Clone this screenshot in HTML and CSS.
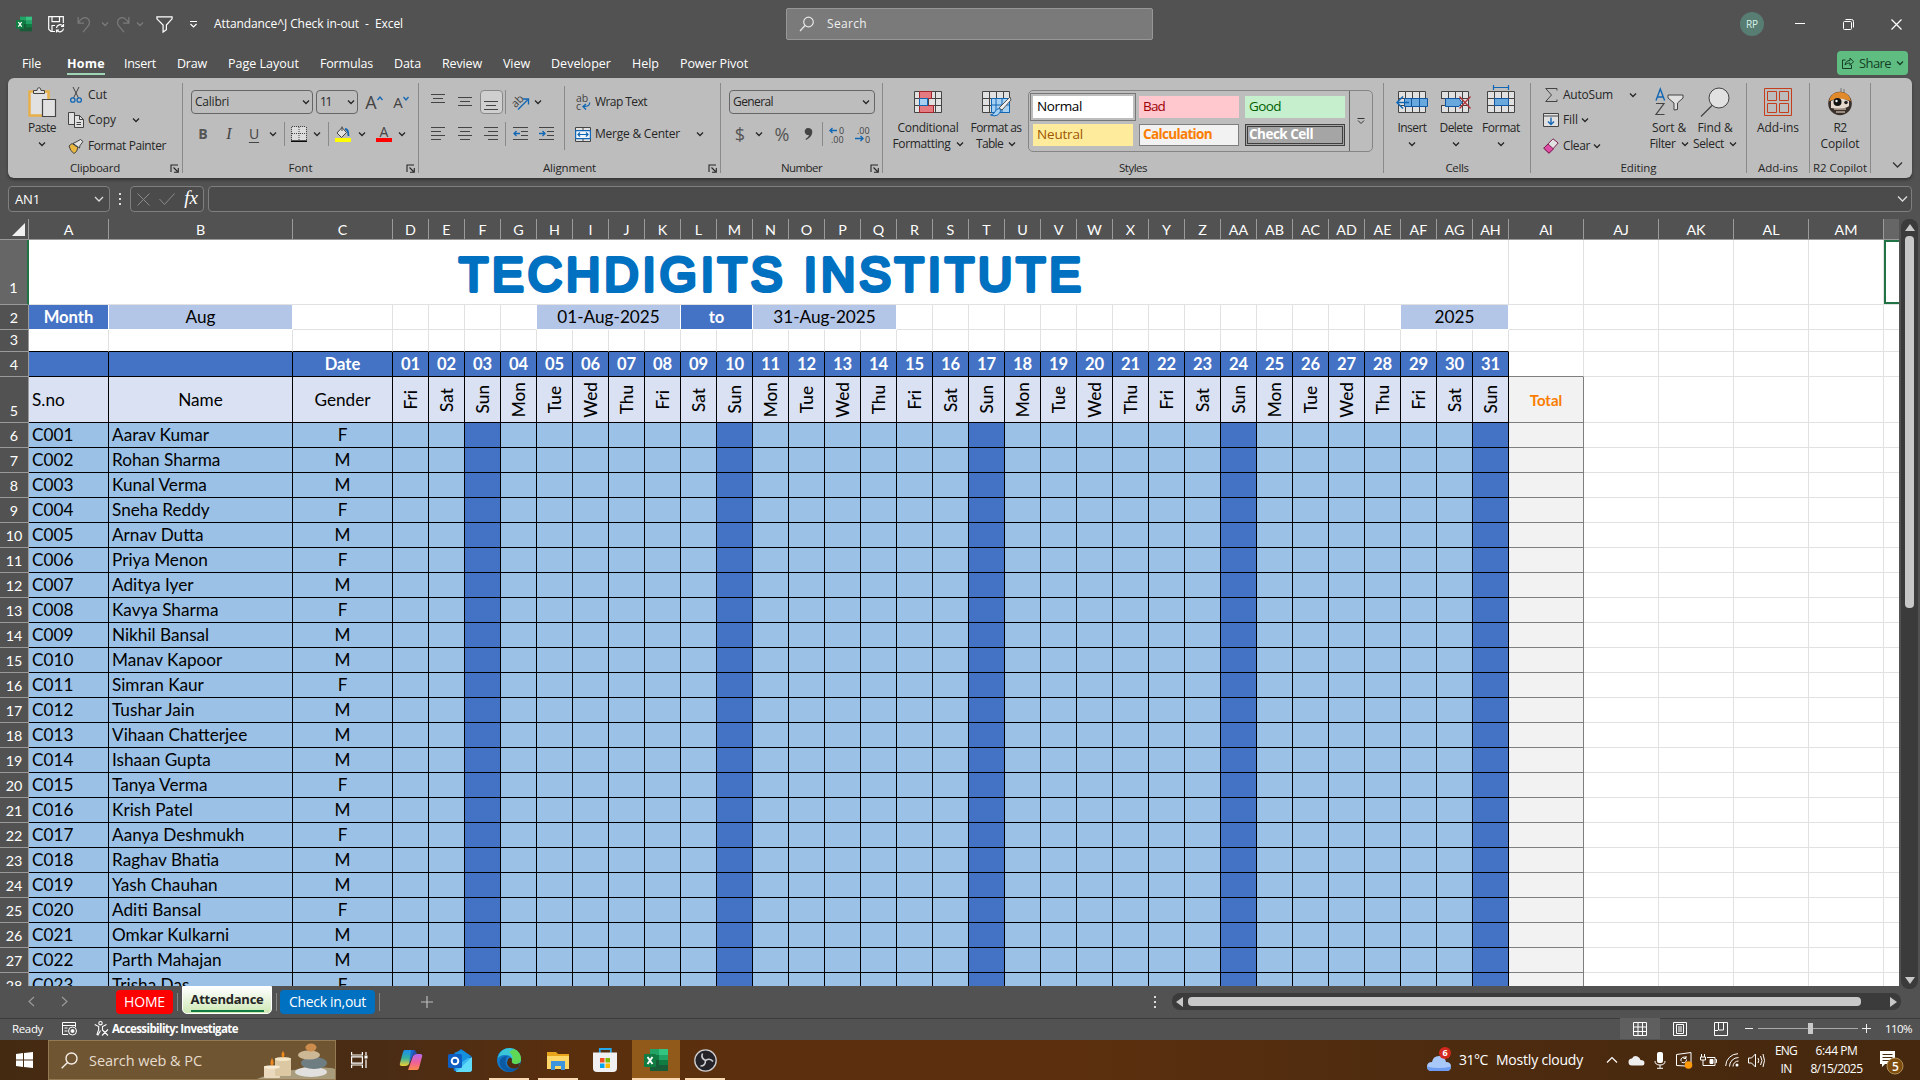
FILE: index.html
```html
<!DOCTYPE html>
<html lang="en">
<head>
<meta charset="utf-8">
<title>Attandance^J Check in-out - Excel</title>
<link rel="stylesheet" href="styles.css">
</head>
<body>
<svg class="defs" width="0" height="0" aria-hidden="true">
  <symbol id="chev" viewBox="0 0 8 8"><path d="M1 2.5l3 3 3-3" fill="none" stroke="currentColor" stroke-width="1.3"/></symbol>
  <symbol id="launch" viewBox="0 0 9 9"><path d="M8 1H1v7M3.500 3.500l4 4M8.300 4v4.300H4" fill="none" stroke="currentColor" stroke-width="1.1"/></symbol>
  <symbol id="excel" viewBox="0 0 24 22"><path d="M6 0h9v6H6z" fill="#21a366"/><path d="M15 0h9v6h-9z" fill="#33c481"/><path d="M6 6h9v5H6z" fill="#107c41"/><path d="M15 6h9v5h-9z" fill="#21a366"/><path d="M6 11h18v11H6z" fill="#185c37"/><path d="M15 11h9v5h-9z" fill="#107c41"/><rect y="5" width="12" height="13" rx="1" fill="#107c41"/><path d="M3.500 8l5 7M8.500 8l-5 7" stroke="#fff" stroke-width="1.900"/></symbol>
  <symbol id="grid3" viewBox="0 0 28 22"><path d="M.5.5h27v21H.5z" fill="#e1e1e1"/><path d="M.5.5h27v21H.5zM0 7.500h28M0 14.500h28M7.500 0v22M14.500 0v22M21.500 0v22" fill="none" stroke="#444"/></symbol>
</svg>

<header class="titlebar">
  <div class="slot w48"><svg width="16" height="16"><use href="#excel"/></svg></div>
  <div class="slot w16"><svg width="17" height="17" viewBox="0 0 17 17" fill="none" stroke="#fff" stroke-width="1.200"><path d="M7 15.500H3L.7 13.300V.7h14.600V7M4 .7v5h7.500v-5M4 15V9.500h3"/><path d="M8.500 12a3.600 3.600 0 0 1 6.500-1.800M15.500 8v2.500H13M15.500 12.500a3.600 3.600 0 0 1-6.500 1.800M8.500 16.500V14H11"/></svg></div>
  <div class="slot w42 dim"><svg width="14" height="17" viewBox="0 0 14 18" fill="none" stroke="currentColor" stroke-width="1.300"><path d="M.8 1v6.500H7M.8 7.500C3 3 7 .5 10.500 2.500c3 2 3 6 .5 8.500l-5 6"/></svg></div>
  <div class="slot w0 dim"><svg width="8" height="8"><use href="#chev"/></svg></div>
  <div class="slot w46 dim"><svg width="14" height="17" viewBox="0 0 14 18" fill="none" stroke="currentColor" stroke-width="1.300"><path d="M13.200 1v6.500H7M13.200 7.500C11 3 7 .5 3.500 2.500c-3 2-3 6-.5 8.500l5 6"/></svg></div>
  <div class="slot w0 dim"><svg width="8" height="8"><use href="#chev"/></svg></div>
  <div class="slot w30"><svg width="17" height="17" viewBox="0 0 18 18" fill="none" stroke="#fff" stroke-width="1.300"><path d="M1 1h16v2l-6 6.500v5L7.500 17V9.500L1 3z"/></svg></div>
  <div class="slot w40"><svg width="9" height="9" viewBox="0 0 9 9" fill="none" stroke="#fff" stroke-width="1.200"><path d="M1 1.500h7M1.500 4l3 3 3-3"/></svg></div>
  <div class="doc-title"><span data-w="189">Attandance^J Check in-out&nbsp; -&nbsp; Excel</span></div>
  <div class="search"><svg width="16" height="16" viewBox="0 0 16 16" fill="none" stroke="#e6e6e6" stroke-width="1.200"><circle cx="9.500" cy="6" r="4.800"/><path d="M6 9.500L1 15"/></svg><span data-w="40">Search</span></div>
  <div class="avatar"><span data-w="12">RP</span></div>
  <div class="slot w48"><svg width="10" height="10" viewBox="0 0 10 10"><path d="M0 4.500h10" stroke="#fff"/></svg></div>
  <div class="slot w48"><svg width="11" height="11" viewBox="0 0 11 11" fill="none" stroke="#fff"><rect x=".5" y="2.500" width="8" height="8" rx="1"/><path d="M2.500.5h6q2 0 2 2v6"/></svg></div>
  <div class="slot w48"><svg width="11" height="11" viewBox="0 0 11 11" stroke="#fff" stroke-width="1.200"><path d="M.5.500l10 10M10.500.5l-10 10"/></svg></div>
</header>

<nav class="tabs">
  <span class="tab file"><span data-w="19">File</span></span>
  <span class="tab on"><span data-w="38">Home</span></span>
  <span class="tab"><span data-w="32">Insert</span></span>
  <span class="tab"><span data-w="30">Draw</span></span>
  <span class="tab"><span data-w="71">Page Layout</span></span>
  <span class="tab"><span data-w="53">Formulas</span></span>
  <span class="tab"><span data-w="27">Data</span></span>
  <span class="tab"><span data-w="40">Review</span></span>
  <span class="tab"><span data-w="27">View</span></span>
  <span class="tab"><span data-w="60">Developer</span></span>
  <span class="tab"><span data-w="27">Help</span></span>
  <span class="tab"><span data-w="68">Power Pivot</span></span>
  <div class="share"><svg width="12" height="12" viewBox="0 0 12 12" fill="none" stroke="#153d25"><path d="M3.500 3H.5v8.500h9V8M3 8c.5-3 2-4.500 5-4.500V1l3.500 3.800L8 8.300V6C6 6 4.500 6.500 3 8z"/></svg><span data-w="32">Share</span><svg width="8" height="8"><use href="#chev"/></svg></div>
</nav>

<section class="ribbon">
  <div class="group g-clip">
    <div class="body">
      <div class="big w66"><div class="pic"><svg width="28" height="30" viewBox="0 0 28 30"><path d="M1.500 4.500h19v24h-19z" fill="#e1e1e1" stroke="#e8b04a" stroke-width="2.500"/><path d="M5.500 6.500v-3H9Q9 .7 11 .7t2 2.800h3.500v3z" fill="#e1e1e1" stroke="#444"/><path d="M14.500 12.500h13v17h-13z" fill="#e1e1e1" stroke="#444" stroke-width="1.200"/></svg></div><span data-w="28">Paste</span><svg class="under" width="8" height="8"><use href="#chev"/></svg></div>
      <div class="stack">
        <div class="row"><div class="ico"><svg width="12" height="16" viewBox="0 0 12 16" fill="none"><path d="M3 0l5.500 11M9 0L3.500 11" stroke="#444"/><circle cx="2.800" cy="13" r="2.200" stroke="#1267b4" stroke-width="1.300"/><circle cx="9.200" cy="13" r="2.200" stroke="#1267b4" stroke-width="1.300"/></svg></div><span data-w="19">Cut</span></div>
        <div class="row"><div class="ico"><svg width="16" height="16" viewBox="0 0 16 16" fill="#e1e1e1" stroke="#444"><path d="M.5.500h6v12h-6z"/><path d="M6.500 3.500h5l4 4v8h-9z"/><path d="M11.500 3.500v4h4M8.500 10.500h4.500M8.500 12.500h4.500" fill="none"/></svg></div><span data-w="28">Copy</span><svg class="ml16" width="8" height="8"><use href="#chev"/></svg></div>
        <div class="row"><div class="ico"><svg width="16" height="15" viewBox="0 0 16 15"><path d="M1 7l3-2.500 6 4-1.500 4L6 14.500Q2 12 1 7z" fill="#e9b73f" stroke="#444"/><path d="M5 4.500L8 3l4.500-2.500 2.500 2-3 4-.5 2.500z" fill="#e1e1e1" stroke="#444"/></svg></div><span data-w="78">Format Painter</span></div>
      </div>
    </div>
    <div class="label"><span data-w="50">Clipboard</span><svg class="launch" width="9" height="9"><use href="#launch"/></svg></div>
  </div>

  <div class="group g-font">
    <div class="body two">
      <div class="line">
        <div class="combo c122"><span data-w="34">Calibri</span><svg width="8" height="8"><use href="#chev"/></svg></div>
        <div class="combo c42"><span data-w="11">11</span><svg width="8" height="8"><use href="#chev"/></svg></div>
        <div class="slot w32 glyph a-big">A<svg width="6" height="5" viewBox="0 0 6 5"><path d="M.5 4L3 1l2.500 3" fill="none" stroke="#1267b4" stroke-width="1.300"/></svg></div>
        <div class="slot w22 glyph a-small">A<svg width="6" height="5" viewBox="0 0 6 5"><path d="M.5 1L3 4l2.500-3" fill="none" stroke="#1267b4" stroke-width="1.300"/></svg></div>
      </div>
      <div class="line">
        <div class="slot w24 fb">B</div><div class="slot w28 fi">I</div><div class="slot w22 fu">U</div><div class="slot w16"><svg width="8" height="8"><use href="#chev"/></svg></div>
        <div class="slot w6"><i class="sep"></i></div>
        <div class="slot w23"><svg width="16" height="16" viewBox="0 0 16 16"><path d="M1 1h14v13H1z" fill="#ddd"/><path d="M1 .5h14M.5 1v13M15.500 1v13M8 1v13M1 7.500h14" stroke="#444" stroke-dasharray="1 1" fill="none"/><path d="M0 15.200h16" stroke="#000" stroke-width="1.500"/></svg></div>
        <div class="slot w14"><svg width="8" height="8"><use href="#chev"/></svg></div>
        <div class="slot w8"><i class="sep"></i></div>
        <div class="slot w22"><svg width="16" height="16" viewBox="0 0 16 16"><path d="M7 1.500L2 7l4.500 4.500 5-5zM7 5V.5" fill="#e1e1e1" stroke="#444"/><path d="M10 3c3 0 3.500 3 3.500 7" fill="none" stroke="#1267b4" stroke-width="1.800"/><path d="M0 12h16v4H0z" fill="#ff0"/></svg></div>
        <div class="slot w16"><svg width="8" height="8"><use href="#chev"/></svg></div>
        <div class="slot w28"><div class="fontcolor">A</div></div>
        <div class="slot w8"><svg width="8" height="8"><use href="#chev"/></svg></div>
      </div>
    </div>
    <div class="label"><span data-w="24">Font</span><svg class="launch" width="9" height="9"><use href="#launch"/></svg></div>
  </div>

  <div class="group g-align">
    <div class="body two">
      <div class="split">
        <div>
          <div class="line">
            <div class="slot w28 lift"><svg width="14" height="12" viewBox="0 0 14 12"><path d="M0 1.500h14M2 5.500h10M0 9.500h14" stroke="#444"/></svg></div>
            <div class="slot w26"><svg width="14" height="12" viewBox="0 0 14 12"><path d="M0 1.500h14M2 5.500h10M0 9.500h14" stroke="#444"/></svg></div>
            <div class="slot w26"><div class="pressed"><svg width="14" height="12" viewBox="0 0 14 12"><path d="M0 1.500h14M2 5.500h10M0 9.500h14" stroke="#444"/></svg></div></div>
            <div class="slot w3"><i class="sep"></i></div>
            <div class="slot w28"><svg width="17" height="17" viewBox="0 0 17 17"><text x="-1" y="10" transform="rotate(-45 6 8)" font-size="11" font-family="Open Sans" fill="#444">ab</text><path d="M5 15.500L14.500 6M10 5h5.500v5.500" fill="none" stroke="#1267b4" stroke-width="1.300"/></svg></div>
            <div class="slot w6"><svg width="8" height="8"><use href="#chev"/></svg></div>
          </div>
          <div class="line">
            <div class="slot w28"><svg width="14" height="14" viewBox="0 0 14 14"><path d="M0 .5h14M0 4.500h10M0 8.500h14M0 12.500h10" stroke="#444"/></svg></div>
            <div class="slot w26"><svg width="14" height="14" viewBox="0 0 14 14"><path d="M0 .5h14M2 4.500h10M0 8.500h14M2 12.500h10" stroke="#444"/></svg></div>
            <div class="slot w26"><svg width="14" height="14" viewBox="0 0 14 14"><path d="M0 .5h14M4 4.500h10M0 8.500h14M4 12.500h10" stroke="#444"/></svg></div>
            <div class="slot w3"><i class="sep"></i></div>
            <div class="slot w26"><svg width="15" height="14" viewBox="0 0 15 14"><path d="M0 .5h15M8 4.500h7M8 8.500h7M0 12.500h15" stroke="#444"/><path d="M7 6.500H1M3.500 4L1 6.500 3.500 9" fill="none" stroke="#1267b4" stroke-width="1.300"/></svg></div>
            <div class="slot w26"><svg width="15" height="14" viewBox="0 0 15 14"><path d="M0 .5h15M8 4.500h7M8 8.500h7M0 12.500h15" stroke="#444"/><path d="M0 6.500h6M3.500 4L6 6.500 3.500 9" fill="none" stroke="#1267b4" stroke-width="1.300"/></svg></div>
          </div>
        </div>
        <div class="wraps">
          <div class="line"><svg width="16" height="17" viewBox="0 0 16 17"><text x="1" y="8" font-size="10.500" font-family="Open Sans" fill="#444">ab</text><text x="1" y="16" font-size="10.500" font-family="Open Sans" fill="#444">c</text><path d="M14.500 8.500q1 4-6 4M11 10l-3 2.500L11 15.500" fill="none" stroke="#1267b4" stroke-width="1.400"/></svg><span data-w="52">Wrap Text</span></div>
          <div class="line"><svg width="16" height="15" viewBox="0 0 16 15"><path d="M.5.500h15v14H.5z" fill="#e1e1e1" stroke="#444"/><path d="M8 0v3M8 12v3" stroke="#444"/><path d="M.6 3.600h14.800v8H.6z" fill="#eef5fb" stroke="#1267b4" stroke-width="1.200"/><path d="M3 7.500h10M5 5.500l-2 2 2 2M11 5.500l2 2-2 2" fill="none" stroke="#1267b4" stroke-width="1.200"/></svg><span data-w="85">Merge &amp; Center</span><svg class="ml16" width="8" height="8"><use href="#chev"/></svg></div>
        </div>
      </div>
    </div>
    <div class="label"><span data-w="53">Alignment</span><svg class="launch" width="9" height="9"><use href="#launch"/></svg></div>
  </div>

  <div class="group g-num">
    <div class="body two">
      <div class="line"><div class="combo c146"><span data-w="40">General</span><svg width="8" height="8"><use href="#chev"/></svg></div></div>
      <div class="line">
        <div class="slot w22 num">$</div><div class="slot w16"><svg width="8" height="8"><use href="#chev"/></svg></div><div class="slot w30 num">%</div>
        <div class="slot w22"><svg width="9" height="14" viewBox="0 0 9 14"><path d="M4 1a3.500 3.500 0 1 0 1 6.900Q4.500 10.500 1.500 12l.5 1Q8.500 10 8.300 4.500 8 1 4 1z" fill="#444"/></svg></div>
        <div class="slot w6"><i class="sep"></i></div>
        <div class="slot w24"><svg width="16" height="17" viewBox="0 0 16 17"><text x="10" y="7.500" class="dec">0</text><text x="2" y="16.500" class="dec">.00</text><path d="M8 4.500H1M3.500 2L1 4.500 3.500 7" fill="none" stroke="#1267b4" stroke-width="1.400"/></svg></div>
        <div class="slot w27"><svg width="16" height="17" viewBox="0 0 16 17"><text x="2" y="7.500" class="dec">.00</text><text x="10" y="16.500" class="dec">0</text><path d="M0 12.500h8M5.500 10L8 12.500 5.500 15" fill="none" stroke="#1267b4" stroke-width="1.400"/></svg></div>
      </div>
    </div>
    <div class="label"><span data-w="41">Number</span><svg class="launch" width="9" height="9"><use href="#launch"/></svg></div>
  </div>

  <div class="group g-styles">
    <div class="body">
      <div class="big w90"><div class="pic"><svg width="28" height="22" viewBox="0 0 28 22"><use href="#grid3"/><path d="M5.500.5h12v7h-12zM5.500 14.500h14v7h-14z" fill="#e47b80" stroke="#a4262c"/><path d="M5.500 7.500h8v7h-8z" fill="#a6d1f2" stroke="#1267b4"/></svg></div><span data-w="61">Conditional</span><span class="second"><span data-w="58">Formatting</span><svg width="8" height="8"><use href="#chev"/></svg></span></div>
      <div class="big w46x"><div class="pic"><svg width="32" height="28" viewBox="-2 -3 32 28"><use href="#grid3" width="28" height="22"/><path d="M9.500 7.500h18v14h-18z" fill="#a6d1f2" stroke="#1267b4"/><path d="M14 7v14M20 7v14M9 14h18" stroke="#1267b4"/><path d="M17 17L28 6l1 3-9 10z" fill="#eee" stroke="#555"/><path d="M19 19q-3-3-5.500 1-2 4-5 4 8 3 10.500-5z" fill="#a6d1f2" stroke="#1267b4"/></svg></div><span data-w="51">Format as</span><span class="second"><span data-w="27">Table</span><svg width="8" height="8"><use href="#chev"/></svg></span></div>
      <div class="gallery">
        <div class="swatches">
          <div class="sw normal"><span data-w="45">Normal</span></div><div class="sw bad"><span data-w="22">Bad</span></div><div class="sw good"><span data-w="32">Good</span></div>
          <div class="sw neutral"><span data-w="46">Neutral</span></div><div class="sw calc"><span data-w="69">Calculation</span></div><div class="sw check"><span data-w="64">Check Cell</span></div>
        </div>
        <div class="more"><svg width="8" height="8" viewBox="0 0 8 8" fill="none" stroke="#333"><path d="M.5 1.500h7M1 3.500l3 3 3-3"/></svg></div>
      </div>
    </div>
    <div class="label"><span data-w="28">Styles</span></div>
  </div>

  <div class="group g-cells">
    <div class="body">
      <div class="big w56"><div class="pic"><svg width="32" height="22" viewBox="0 0 32 22"><use href="#grid3" x="2" width="28" height="22"/><path d="M8.500 7.500h23v8h-23z" fill="#69a8dc" stroke="#1257a4"/><path d="M15.500 8v7M23.500 8v7" stroke="#1257a4"/><path d="M13 11.500H1.500M7 5.500l-6 6 6 6" fill="none" stroke="#1267b4" stroke-width="1.500"/></svg></div><span data-w="29">Insert</span><svg class="under" width="8" height="8"><use href="#chev"/></svg></div>
      <div class="big w32"><div class="pic"><svg width="30" height="22" viewBox="0 0 30 22"><use href="#grid3" width="28" height="22"/><path d="M0 8h4v6H0z" fill="#bdbdbd"/><path d="M4.500 7.500H18l3 4-3 4H4.500z" fill="#69a8dc" stroke="#1257a4"/><path d="M18.500 5.500l11 12M29.500 5.500l-11 12" stroke="#b0343a" stroke-width="1.300"/></svg></div><span data-w="33">Delete</span><svg class="under" width="8" height="8"><use href="#chev"/></svg></div>
      <div class="big w58"><div class="pic"><svg width="28" height="32" viewBox="0 0 28 32"><use href="#grid3" y="5" width="28" height="22"/><path d="M7.500 12.500h14v7h-14z" fill="#69a8dc" stroke="#1257a4"/><path d="M6 1.500h16M6.500-1v5M21.500-1v5" stroke="#1267b4" stroke-width="1.200"/></svg></div><span data-w="38">Format</span><svg class="under" width="8" height="8"><use href="#chev"/></svg></div>
    </div>
    <div class="label"><span data-w="23">Cells</span></div>
  </div>

  <div class="group g-edit">
    <div class="body">
      <div class="stack">
        <div class="row"><div class="ico"><svg width="12" height="14" viewBox="0 0 12 14"><path d="M12 2.500V.500H.7L6.500 7 .7 13.500H12v-2" fill="none" stroke="#444"/></svg></div><span data-w="50">AutoSum</span><svg class="ml16" width="8" height="8"><use href="#chev"/></svg></div>
        <div class="row"><div class="ico"><svg width="16" height="14" viewBox="0 0 16 14"><path d="M.5.500h15v13H.5z" fill="#e1e1e1" stroke="#444"/><path d="M0 3h16" stroke="#444"/><path d="M8 4.500v7M5 8.500l3 3 3-3" fill="none" stroke="#1267b4" stroke-width="1.400"/></svg></div><span data-w="15">Fill</span><svg class="ml2" width="8" height="8"><use href="#chev"/></svg></div>
        <div class="row"><div class="ico"><svg width="16" height="16" viewBox="0 0 16 16"><path d="M10 .8L15.200 5 6 15.200.8 10.200z" fill="#e1e1e1" stroke="#7a2050"/><path d="M5 6l5.500 5L6 15.200.8 10.200z" fill="#e04ba5" stroke="#7a2050"/></svg></div><span data-w="27">Clear</span><svg class="ml2" width="8" height="8"><use href="#chev"/></svg></div>
      </div>
      <div class="big w46"><div class="pic"><svg width="29" height="28" viewBox="0 0 29 28" fill="none"><path d="M1 12.500L5.300 1l4.300 11.500M2.500 9h5.700" stroke="#1267b4" stroke-width="1.400"/><path d="M1 15.500h8L1 26.500h8.500" stroke="#444" stroke-width="1.200"/><path d="M13 7h15v3l-5.500 5v6.500L19 22v-7l-6-5z" fill="#e1e1e1" stroke="#444"/></svg></div><span data-w="34">Sort &amp;</span><span class="second"><span data-w="26">Filter</span><svg width="8" height="8"><use href="#chev"/></svg></span></div>
      <div class="big w46"><div class="pic"><svg width="30" height="30" viewBox="0 0 30 30"><circle cx="19" cy="11" r="10" fill="#e1e1e1" stroke="#444"/><path d="M12 18.500L1 29.500" stroke="#444" stroke-width="1.300"/></svg></div><span data-w="35">Find &amp;</span><span class="second"><span data-w="31">Select</span><svg width="8" height="8"><use href="#chev"/></svg></span></div>
    </div>
    <div class="label"><span data-w="36">Editing</span></div>
  </div>

  <div class="group g-add">
    <div class="body"><div class="big w62"><div class="pic"><svg width="28" height="28" viewBox="0 0 28 28" fill="none" stroke="#c43e1c"><path d="M.5.500h27v27H.5zM3.500 3.500h9v9h-9zM15.500 3.500h9v9h-9zM3.500 15.500h9v9h-9zM15.500 15.500h9v9h-9z"/></svg></div><span data-w="42">Add-ins</span></div></div>
    <div class="label"><span data-w="40">Add-ins</span></div>
  </div>

  <div class="group g-r2">
    <div class="body"><div class="big w60"><div class="pic"><svg width="24" height="28" viewBox="0 0 24 28"><path d="M13 0v4M16 1v4" stroke="#777"/><circle cx="12" cy="15.500" r="11.800" fill="#3a302b"/><path d="M1 13Q3 4 12 4t11 9q-11-4-22 0z" fill="#e08a2c"/><path d="M3 13q9-5 18 0v5q-5 4-18 2z" fill="#e4d9cc"/><circle cx="9.500" cy="14" r="4" fill="#111"/><circle cx="8.500" cy="13" r="1.200" fill="#fff"/><circle cx="18" cy="14.500" r="1.800" fill="#222"/><path d="M6 21h12M8 24h9" stroke="#b9a99a" stroke-width="1.600"/></svg></div><span data-w="13">R2</span><span data-w="39">Copilot</span></div></div>
    <div class="label"><span data-w="54">R2 Copilot</span></div>
  </div>
  <div class="collapse"><svg width="11" height="8" viewBox="0 0 11 8"><path d="M1 1.500l4.500 4.500L10 1.500" fill="none" stroke="#333" stroke-width="1.300"/></svg></div>
</section>

<section class="formula">
  <div class="namebox"><span data-w="25">AN1</span><svg width="10" height="8" viewBox="0 0 10 8"><path d="M1 2l4 4 4-4" fill="none" stroke="#ddd" stroke-width="1.300"/></svg></div>
  <div class="dots"><i></i><i></i><i></i></div>
  <div class="fx"><svg width="13" height="13" viewBox="0 0 13 13"><path d="M.5.500l12 12M12.500.5l-12 12" stroke="#8b8b8b"/></svg><svg width="16" height="12" viewBox="0 0 16 12"><path d="M.5 6l5 5.500L15.500.5" fill="none" stroke="#8b8b8b"/></svg><em>fx</em></div>
  <div class="input"><svg width="11" height="8" viewBox="0 0 11 8"><path d="M1 1.500l4.500 4.500L10 1.500" fill="none" stroke="#ddd" stroke-width="1.300"/></svg></div>
</section>

<main class="work">
  <div class="sheet" id="sheet"></div>
  <div class="vscroll"><i class="up"></i><i class="thumb"></i><i class="down"></i></div>
</main>

<footer class="sheetbar">
  <div class="arrows"><svg width="7" height="11" viewBox="0 0 7 11"><path d="M6 1L1 5.500 6 10" fill="none" stroke="#9a9a9a" stroke-width="1.200"/></svg><svg width="7" height="11" viewBox="0 0 7 11"><path d="M1 1l5 4.500L1 10" fill="none" stroke="#9a9a9a" stroke-width="1.200"/></svg></div>
  <div class="stab red"><span data-w="41">HOME</span></div><i class="tsep"></i>
  <div class="stab cur"><span data-w="73">Attendance</span></div><i class="tsep"></i>
  <div class="stab blue"><span data-w="77">Check in,out</span></div><i class="tsep"></i>
  <div class="plus"><svg width="12" height="12" viewBox="0 0 12 12"><path d="M6 0v12M0 6h12" stroke="#bbb" stroke-width="1.200"/></svg></div>
  <div class="dots hd"><i></i><i></i><i></i></div>
  <div class="hscroll"><i class="left"></i><i class="bar"></i><i class="right"></i></div>
</footer>

<div class="status">
  <span data-w="31">Ready</span>
  <svg class="rec" width="15" height="14" viewBox="0 0 15 14" fill="none" stroke="#fff"><path d="M6 12.500H.5v-12h13V5M0 3.500h14M2.500 6h3M2.500 9h3"/><circle cx="10.500" cy="9" r="4"/><circle cx="10.500" cy="9" r="1.500" fill="#fff"/></svg>
  <svg class="acc" width="15" height="15" viewBox="0 0 15 15" fill="none" stroke="#fff" stroke-width="1.100"><circle cx="6.500" cy="2.200" r="1.700"/><path d="M.7 3.500l4 2v3L3 13.500l1 .5 2.500-4.500M12.500 3.500l-4 2v3M8 8.500l6 6M14 8.500l-6 6"/></svg>
  <b data-w="126">Accessibility: Investigate</b>
  <div class="views">
    <div class="vb active"><svg width="14" height="14" viewBox="0 0 14 14" fill="none" stroke="#fff"><path d="M.5.500h13v13H.5zM5 0v14M9.500 0v14M0 5h14M0 9.500h14"/></svg></div>
    <div class="vb"><svg width="14" height="14" viewBox="0 0 14 14" fill="none" stroke="#fff"><path d="M.5.500h13v13H.5zM3.500 2.500h7v9h-7zM5 5h4M5 7h4M5 9h4"/></svg></div>
    <div class="vb"><svg width="14" height="14" viewBox="0 0 14 14" fill="none" stroke="#fff"><path d="M.5.500h13v13H.5zM4.500 0v8h5V0M0 8.500h4"/></svg></div>
    <i class="minus"></i><div class="slider"><i></i></div><svg width="9" height="9" viewBox="0 0 9 9"><path d="M4.500 0v9M0 4.500h9" stroke="#eee"/></svg><span class="pct"><span data-w="27">110%</span></span>
  </div>
</div>

<div class="taskbar">
  <div class="slot w48"><svg width="17" height="16" viewBox="0 0 17 16" fill="#fff"><path d="M0 2l7-1v6.500H0zM8 .9L17 0v7.500H8zM0 8.500h7V15l-7-1zM8 8.500h9V16l-9-1z"/></svg></div>
  <div class="tsearch"><svg width="17" height="17" viewBox="0 0 17 17" fill="none" stroke="#f5efe6" stroke-width="1.400"><circle cx="10.500" cy="6.500" r="5.500"/><path d="M6.500 10.500L.7 16.300"/></svg><span data-w="113">Search web &amp; PC</span>
    <svg class="art" width="78" height="38" viewBox="0 0 78 38"><path d="M0 38q20-9 50-10 20-3 28 0v10z" fill="#a89c7c"/><rect x="7" y="25" width="16" height="12" rx="1" fill="#ead9bd"/><rect x="18" y="17" width="16" height="18" rx="1" fill="#dcc9a4"/><ellipse cx="26" cy="18" rx="8" ry="2" fill="#f3e6c6"/><ellipse cx="15" cy="26" rx="8" ry="1.800" fill="#f8ecd4"/><path d="M15 25q-3-3 0-8 3 5 0 8zM26 17q-3-3 0-7 3 4 0 7z" fill="#f08a1d"/><ellipse cx="54" cy="31" rx="16" ry="5" fill="#e1e0de"/><ellipse cx="57" cy="22" rx="13" ry="6" fill="#6d7d81"/><ellipse cx="52" cy="14" rx="11" ry="4.500" fill="#cdb896"/><ellipse cx="54" cy="6.500" rx="5.500" ry="4" fill="#cc8c4d"/></svg></div>
  <div class="slot w47"><svg width="17" height="16" viewBox="0 0 17 16" fill="none" stroke="#fff" stroke-width="1.200"><path d="M.6 0v3h10.800V0M.6 16v-3h10.800v3M.6 4.800h10.800v6.400H.6zM15 0v3M15 7.500V16"/><path d="M13.500 3.500h3v3h-3z" fill="#fff" stroke="none"/></svg></div>
  <div class="slot w56t"><svg width="24" height="22" viewBox="0 0 24 22"><defs><linearGradient id="cp1" x2="0" y2="1"><stop offset="0" stop-color="#1b8df0"/><stop offset=".5" stop-color="#35b0a0"/><stop offset="1" stop-color="#f3cf2e"/></linearGradient><linearGradient id="cp2" x2="0" y2="1"><stop offset="0" stop-color="#b36bf0"/><stop offset=".5" stop-color="#ee5f9c"/><stop offset="1" stop-color="#fb8b4a"/></linearGradient></defs><path d="M6 1h9l-5 14q-1 2-4 2H3q-3 0-2-3L4 3q.5-2 2-2z" fill="url(#cp1)"/><path d="M18 21H9l5-14q1-2 4-2h3q3 0 2 3l-3 11q-.5 2-2 2z" fill="url(#cp2)"/><path d="M12 1h4l2 4q-4 0-5 4l-3 6z" fill="#1c5bd0" opacity=".8"/></svg></div>
  <div class="slot w42t"><svg width="24" height="23" viewBox="0 0 24 23"><path d="M3 8L13 0l11 8v14H6z" fill="#1872c8"/><path d="M5 9h19v11q0 3-3 3H8z" fill="#3ab7f0"/><path d="M24 8L8 23h13q3 0 3-3z" fill="#5fdcf7"/><path d="M6 4l8-3 9 6-9 6z" fill="#1490df"/><rect y="5" width="14" height="14" rx="1.500" fill="#0f5ec1"/><circle cx="7" cy="12" r="3.300" fill="none" stroke="#fff" stroke-width="2"/></svg></div>
  <div class="slot w56t app"><svg width="24" height="24" viewBox="0 0 24 24"><circle cx="12" cy="12" r="12" fill="#1579c8"/><path d="M1 9Q4 0 13 0t11 11q0 5-6 5-4 0-3-3 0-6-7-6-5 0-7 3z" fill="#39c7d8"/><path d="M17 1q7 3 7 10 0 5-6 5-4 0-3-3 2-6-3-9z" fill="#5fd855"/><path d="M9 11q-2 6 3 9 5 2 10-2-4 7-12 5.500Q1 20 3 12q2-4 8-4-2 1-2 3z" fill="#0c59a4"/><path d="M15 12q-1 2 1 3.500 3 1.500 7-.5l-1 4q-6 3-10 0-4-4 0-9 3-1 3 2z" fill="#502c10"/></svg></div>
  <div class="slot w42e app"><svg width="22" height="19" viewBox="0 0 22 19"><path d="M0 1h9l2 2h11v15H0z" fill="#e8a51b"/><path d="M0 5h22v13H0z" fill="#ffd768"/><path d="M4 10h14v9h-4v-4H8v4H4z" fill="#3b94dc"/></svg></div>
  <div class="slot w54t"><svg width="24" height="24" viewBox="0 0 24 24"><path d="M6.800 6V1h11v5" fill="none" stroke="#27a7ea" stroke-width="1.800"/><path d="M0 4.500h24V20q0 4-4 4H4q-4 0-4-4z" fill="#f0f0f2"/><path d="M7 10h4.500v4.500H7z" fill="#f25022"/><path d="M12.500 10H17v4.500h-4.500z" fill="#7fba00"/><path d="M7 15.500h4.500V20H7z" fill="#00a4ef"/><path d="M12.500 15.500H17V20h-4.500z" fill="#ffb900"/></svg></div>
  <div class="slot w48 app hot"><svg width="24" height="22"><use href="#excel"/></svg></div>
  <div class="slot w50 app"><svg width="23" height="23" viewBox="0 0 23 23"><circle cx="11.500" cy="11.500" r="10.700" fill="#25232a" stroke="#cfcfd2" stroke-width="1.300"/><path d="M11.500 11.500Q6.500 9 8.500 4.500M11.500 11.500Q16 8.500 19 12.500M11.500 11.500Q11.500 17 6.500 17" fill="none" stroke="#cfcfd2" stroke-width="1.600"/></svg></div>
  <div class="tray">
    <div class="weather"><svg width="28" height="26" viewBox="0 0 28 26"><path d="M6 24q-5 0-5-4.500T6 15q1-6 7-6t7 6q5 0 5 4.500T20 24z" fill="#a9c8fa"/><path d="M6 24q-5 0-5-4.500 12 3 24 0Q25 24 20 24z" fill="#6d9cf0"/><circle cx="19" cy="6" r="6" fill="#d3281e"/><text x="16.600" y="9.300" font-size="9" font-weight="700" font-family="Open Sans" fill="#fff">6</text></svg></div>
    <span class="temp" data-w="29">31°C</span><span class="cond" data-w="87">Mostly cloudy</span>
    <div class="slot w24y"><svg width="12" height="8" viewBox="0 0 12 8"><path d="M1 6.500l5-5 5 5" fill="none" stroke="#fff" stroke-width="1.200"/></svg></div>
    <div class="slot w24y"><svg width="17" height="11" viewBox="0 0 17 11"><path d="M4 10.500a3.500 3.500 0 0 1 0-7Q6 0 9.500 1.500q2.500 1 3 3.500 4 0 4 3t-3 2.500z" fill="#eee"/></svg></div>
    <div class="slot w24y"><svg width="12" height="17" viewBox="0 0 12 17"><rect x="3" width="6" height="11" rx="2" fill="#fff"/><path d="M1 9q0 4 5 4t5-4M6 13v3M3 16.300h6" fill="none" stroke="#fff"/></svg></div>
    <div class="slot w24y"><svg width="17" height="17" viewBox="0 0 17 17" fill="none" stroke="#fff"><path d="M.5 2.500L15 .5V12M.5 2.500v11l9 .5M5 9a3 3 0 0 1 5-3M10 4v2.500H7.500M10.500 7.500a3 3 0 0 1-5 2.500"/><circle cx="12.500" cy="13" r="3.800" fill="#ff9a0c" stroke="none"/></svg></div>
    <div class="slot w24y"><svg width="17" height="12" viewBox="0 0 17 12" fill="none" stroke="#fff"><path d="M1.500 0v3M4.500 0v3M.5 3h5v3h-5zM3 6v5.500h12v-8H7M15.500 5.500h1v3h-1"/><path d="M10 5.500h3v4h-3z" fill="#fff"/></svg></div>
    <div class="slot w24y"><svg width="14" height="14" viewBox="0 0 14 14" fill="none" stroke="#fff"><path d="M.7 13A12.500 12.500 0 0 1 13 .7M4.500 13.500a9 9 0 0 1 9-9M8 13.500A5.500 5.500 0 0 1 13.500 8"/><circle cx="12" cy="12" r="1.500" fill="#fff" stroke="none"/></svg></div>
    <div class="slot w24y"><svg width="17" height="15" viewBox="0 0 17 15" fill="none" stroke="#fff"><path d="M.5 5h3L7.500 1v13L3.500 10h-3zM10 5q1.500 2.500 0 5M12.500 3q3 4.500 0 9M15 1q3 6.500 0 13"/></svg></div>
    <div class="twin lang"><span data-w="22">ENG</span><span data-w="11">IN</span></div>
    <div class="twin clock"><span data-w="42">6:44 PM</span><span data-w="52">8/15/2025</span></div>
    <div class="notif"><svg width="26" height="26" viewBox="0 0 26 26"><path d="M1 2h15v13H6l-3 3v-3H1z" fill="#fff"/><path d="M3.500 5.500h10M3.500 8.500h10M3.500 11.500h7" stroke="#4a2a0e"/><circle cx="16" cy="17" r="8" fill="#7e4d0e" stroke="#b08d55"/><text x="13" y="21.500" font-size="12" font-weight="600" font-family="Open Sans" fill="#fff">5</text></svg></div>
  </div>
</div>
<script src="app.js"></script>
</body>
</html>
```
FILE: styles.css
```css
* { box-sizing: border-box; }
body { margin: 0; width: 1920px; height: 1080px; overflow: hidden; background: #525252; color: #fff; font: 12px/16px "Open Sans", "Noto Sans", sans-serif; display: flex; flex-direction: column; }
svg { display: block; flex: none; overflow: visible; }
.defs { position: absolute; }
span, b { white-space: nowrap; }
i { display: block; }
[data-w] { display: inline-block; flex: none; }

.slot { display: flex; align-items: center; justify-content: center; flex: none; }
.w0 { width: 0; } .w3 { width: 3px; } .w6 { width: 6px; } .w8 { width: 8px; } .w14 { width: 14px; } .w16 { width: 16px; }
.w22 { width: 22px; } .w23 { width: 23px; } .w24 { width: 24px; } .w26 { width: 26px; } .w27 { width: 27px; } .w28 { width: 28px; }
.w30 { width: 30px; } .w32 { width: 32px; } .w40 { width: 40px; } .w42 { width: 42px; } .w46 { width: 46px; } .w47 { width: 47px; }
.w46x { width: 46px; } .w48 { width: 48px; } .w50 { width: 50px; } .w56 { width: 56px; } .w58 { width: 58px; }
.w60 { width: 60px; } .w62 { width: 62px; } .w66 { width: 60px; margin-left: 3px; } .w90 { width: 90px; }

/* title bar */
.titlebar { display: flex; height: 48px; align-items: center; flex: none; }
.dim { color: #7b7b7b; }
.titlebar .w16 { width: 17px; }
.titlebar .slot.w42 { width: 38px; }
.titlebar .slot.w0 { width: 8px; margin: 0 -2px; }
.titlebar .slot.w46 { width: 31px; }
.titlebar .w30 { margin-left: 4px; width: 37px; }
.titlebar .w40 { width: 20px; }
.doc-title { width: 583px; padding-left: 11px; }
.search { width: 367px; height: 32px; background: #7a7a7a; border: 1px solid #979797; border-radius: 2px; display: flex; align-items: center; gap: 12px; padding-left: 12px; color: #f0f0f0; }
.avatar { margin: 0 12px 0 auto; width: 24px; height: 24px; border-radius: 50%; background: #587d73; color: #d4f2e6; font-size: 10px; display: flex; align-items: center; justify-content: center; }

/* ribbon tabs */
.tabs { display: flex; height: 30px; padding: 0 12px 0 22px; gap: 21px; flex: none; align-items: flex-start; font-size: 12.500px; }
.tab { height: 27px; line-height: 31px; border-bottom: 2px solid transparent; }
.file { margin-right: 5px; }
.on { font-weight: 700; border-color: #9fd5b7; margin-right: -2px; }
.share { margin: 3px 0 0 auto; width: 71px; height: 24px; border-radius: 4px; background: #5fbd82; color: #153d25; display: flex; align-items: center; padding-left: 5px; gap: 5px; font-size: 13px; }

/* ribbon */
.ribbon { margin: 0 8px; height: 100px; flex: none; display: flex; background: #bdbdbd; color: #262626; border-radius: 6px; box-shadow: 0 2px 3px #333; }
.group { height: 90px; margin-top: 5px; border-right: 1px solid #8a8a8a; flex: none; }
.g-clip { width: 175px; } .g-font { width: 236px; } .g-align { width: 302px; } .g-num { width: 162px; } .g-styles { width: 501px; }
.g-cells { width: 147px; } .g-edit { width: 216px; } .g-add { width: 63px; } .g-r2 { width: 61px; }
.body { height: 77px; display: flex; }
.two { display: block; padding: 3px 0 0 8px; }
.g-align .two { padding-left: 5px; }
.label { height: 13px; line-height: 15px; text-align: center; position: relative; font-size: 11.500px; }
.launch { position: absolute; right: 3px; top: 4px; }
.big { display: flex; flex-direction: column; align-items: center; flex: none; }
.pic { height: 37px; display: flex; align-items: center; justify-content: center; }
.under { margin-top: 4px; }
.second { display: flex; align-items: center; gap: 5px; }
.stack { display: grid; grid-template-rows: 24px 26px 26px; }
.row { display: flex; align-items: center; }
.ico { width: 16px; margin-right: 4px; display: flex; justify-content: center; }
.g-clip .w66 { margin-left: 4px; }
.g-clip .stack { margin-left: -4px; }
.g-edit .stack { width: 115px; padding-left: 12px; }
.ml16 { margin-left: 16px; } .ml2 { margin-left: 3px; }
.line { height: 32px; display: flex; align-items: center; }
.combo { height: 24px; border: 1px solid #666; border-radius: 4px; display: flex; align-items: center; justify-content: space-between; padding: 0 2px 0 3px; margin-right: 3px; }
.c122 { width: 122px; } .c42 { width: 42px; margin-right: 0; } .c146 { width: 146px; margin: 0; padding-right: 4px; }
.sep { width: 1px; height: 24px; background: #8a8a8a; flex: none; }
.glyph { color: #444; align-items: center; }
.glyph svg { align-self: flex-start; margin-top: 2px; }
.a-big { font-size: 18px; } .a-small { font-size: 15px; }
.fb { font-weight: 700; font-size: 14px; color: #555; } .fi { font-style: italic; font-family: "Liberation Serif", serif; font-size: 16px; color: #444; } .fu { text-decoration: underline; text-underline-offset: 3px; font-size: 14px; color: #444; }
.fontcolor { width: 16px; height: 16px; border-bottom: 4px solid #f00; font-size: 14px; line-height: 11px; text-align: center; color: #444; }
.lift { padding-bottom: 7px; }
.pressed { width: 23px; height: 24px; border: 1px solid #888; background: #cfcfcf; border-radius: 4px; display: flex; align-items: center; justify-content: center; padding-top: 7px; }
.split { display: flex; }
.split > div:first-child { width: 140px; }
.wraps { border-left: 1px solid #8a8a8a; padding-left: 10px; height: 64px; }
.wraps span { margin-left: 4px; }
.num { font-size: 18px; color: #555; }
.dec { font: 9px "Open Sans", sans-serif; fill: #444; }
.gallery { margin: 7px 0 0 9px; width: 345px; height: 62px; border: 1px solid #858585; border-radius: 5px; display: flex; }
.swatches { width: 320px; padding: 5px 0 0 4px; display: grid; grid-template-columns: repeat(3, 100px); grid-auto-rows: 22px; gap: 6px; font: 13.500px/21px "Open Sans", sans-serif; }
.sw { padding-left: 4px; }
.normal { background: #fff; color: #000; outline: 1px solid #777; outline-offset: 2px; }
.bad { background: #ffc7ce; color: #9c0006; } .good { background: #c6efce; color: #006100; } .neutral { background: #ffeb9c; color: #9c5700; }
.calc { background: #f2f2f2; color: #fa7d00; border: 1px solid #7f7f7f; font-weight: 700; line-height: 19px; padding-left: 3px; }
.check { background: #a5a5a5; color: #fff; border: 3px double #3f3f3f; font-weight: 700; line-height: 15px; padding-left: 1px; }
.more { flex: 1; border-left: 1px solid #666; display: flex; align-items: center; justify-content: center; }
.collapse { margin: 83px 0 0 21px; }

/* formula bar */
.formula { height: 41px; padding: 8px 8px 0; display: flex; flex: none; }
.namebox, .fx, .input { height: 26px; border: 1px solid #7f7f7f; border-radius: 4px; display: flex; align-items: center; background: #4b4b4b; }
.namebox { width: 102px; justify-content: space-between; padding: 0 5px 0 6px; font-size: 13px; }
.dots { width: 20px; display: flex; flex-direction: column; align-items: center; gap: 3px; height: 26px; justify-content: center; }
.dots i { width: 2px; height: 2px; background: #ddd; }
.fx { width: 74px; padding: 0 5px 0 6px; justify-content: space-between; }
.fx em { font: italic 19px/20px "Liberation Serif", serif; margin-top: -3px; }
.input { flex: 1; margin-left: 4px; justify-content: flex-end; padding-right: 3px; }

/* worksheet */
.work { height: 767px; display: flex; flex: none; }
.sheet { width: 1899px; height: 767px; overflow: hidden; background: #fff; color: #000; font: 17.200px/24px Lato, sans-serif; flex: none; }
.r { display: flex; }
.c { flex: none; border-right: 1px solid #e1e1e1; border-bottom: 1px solid #e1e1e1; white-space: nowrap; overflow: hidden; display: flex; align-items: center; justify-content: center; }
.rh { background: #525252; color: #fff; border-color: #9a9a9a; font-size: 14.300px; line-height: 20px; align-items: flex-end; width: 29px; padding-bottom: 1px; }
.r1 .rh { padding-bottom: 6px; }
.colhead .c { background: #525252; color: #fff; border-color: #9a9a9a; font-size: 14.300px; height: 21px; line-height: 20px; padding-top: 2px; }
.colhead .c:first-child { justify-content: flex-end; align-items: flex-end; padding: 0 3px 3px 0; }
.corner { width: 13px; height: 13px; background: #f0f0f0; clip-path: polygon(100% 0, 100% 100%, 0 100%); }
.colhead .act, .rh.act { background: #666; }
.rh.act { border-right: 2px solid #217346; }
.hA { width: 80px; } .hB { width: 184px; } .hC { width: 100px; } .hd { width: 36px; } .hx { width: 75px; } .hz { width: 15px; border-right: 0; }
.r1 .c { height: 65px; } .r2 .c { height: 25px; } .r3 .c { height: 22px; } .r4 .c { height: 25px; } .r5 .c { height: 46px; } .rn .c { height: 25px; }
.merged { width: 1480px; }
.brand { font: 47.500px "Liberation Sans", Arial, sans-serif; fill: #0070c0; stroke: #0070c0; stroke-width: 4px; stroke-linejoin: round; stroke-linecap: round; }
.m144 { width: 144px; } .m72 { width: 72px; } .m108 { width: 108px; }
.white { border-color: #fff; }
.wr { border-right-color: #fff; }
.kb { border-bottom-color: #000; }
.c.k { border-color: #000; }
.blue { background: #4472c4; color: #fff; font-weight: 700; font-size: 16.600px; }
.pale { background: #b4c6e7; }
.head { background: #d9e1f2; }
.light { background: #9bc2e6; }
.left { justify-content: flex-start; padding-left: 3px; }
.gray { background: #f2f2f2; border-color: #7f7f7f; }
.gb { border-bottom-color: #7f7f7f; }
.total { color: #fa7d00; font-weight: 700; font-size: 15px; }
.vert { writing-mode: vertical-rl; transform: rotate(180deg); line-height: 20px; font-weight: 500; }
.selected { box-shadow: inset 2px 2px #217346, inset 0 -2px #217346; }
.vscroll { margin-left: 2px; width: 17px; height: 770px; background: #3b3b3b; border-radius: 8px; display: flex; flex-direction: column; align-items: center; padding: 5px 0; z-index: 1; }
.vscroll .thumb { width: 9px; height: 372px; border-radius: 4px; background: #c8c8c8; margin-top: 5px; }
.up, .down { border: 5px solid transparent; border-top: 0; border-bottom: 7px solid #c8c8c8; }
.down { border-bottom: 0; border-top: 7px solid #c8c8c8; margin-top: auto; }

/* sheet tabs */
.sheetbar { height: 33px; border-bottom: 1px solid #3c3c3c; display: flex; flex: none; font-size: 14px; }
.arrows { width: 116px; padding: 10px 0 0 28px; display: flex; gap: 26px; }
.stab { height: 24px; margin-top: 4px; border-radius: 4px; display: flex; align-items: center; justify-content: center; }
.red { width: 57px; background: #f00; }
.cur { width: 90px; height: 28px; margin-top: 0; color: #262626; font-weight: 700; font-size: 13px; background: linear-gradient(#fff, #cde8b4); border: 1px solid #fff; border-radius: 0 0 5px 5px; }
.cur span { border-bottom: 2px solid #107c41; line-height: 20px; height: 23px; }
.sheetbar .blue { width: 95px; margin-left: -1px; background: #0070c0; font-weight: 400; font-size: 14px; }
.tsep { width: 1px; height: 18px; margin: 7px 4px 0; background: #858585; }
.plus { margin: 10px 0 0 37px; width: 12px; }
.dots.hd { margin-left: auto; height: 32px; width: 35px; }
.hscroll { width: 729px; height: 17px; margin: 7px 19px 0 0; border-radius: 8px; background: #3b3b3b; display: flex; align-items: center; padding: 0 4px; }
.hscroll .left { padding: 0; border: 5px solid transparent; border-left: 0; border-right: 7px solid #c8c8c8; }
.bar { width: 673px; height: 9px; margin-left: 5px; border-radius: 4px; background: #c8c8c8; }
.right { margin-left: auto; border: 5px solid transparent; border-right: 0; border-left: 7px solid #c8c8c8; }

/* status bar */
.status { height: 21px; display: flex; align-items: center; padding: 0 0 2px 12px; font-size: 11.500px; flex: none; }
.rec { margin-left: 19px; } .acc { margin: 0 3px 0 17px; }
.views { margin-left: auto; display: flex; align-items: center; height: 21px; padding-right: 8px; }
.vb { width: 40.500px; height: 21px; display: flex; align-items: center; justify-content: center; }
.active { background: #5f5f5f; }
.minus { width: 8px; height: 1px; background: #eee; margin: 0 5px 0 4px; }
.slider { width: 100px; height: 1px; background: #aaa; margin-right: 4px; }
.slider i { width: 5px; height: 11px; background: #c8c8c8; margin: -5px 0 0 50px; }
.pct { margin-left: 14px; }

/* taskbar */
.taskbar { height: 40px; flex: none; display: flex; background: linear-gradient(90deg, #452a12, #4a2c14 20%, #5a2f0e 30%, #5c300e 55%, #4d2b0f 75%, #45280e); }
.tsearch { width: 288px; border: 1px solid #957a54; background: #6f5532; display: flex; align-items: center; padding-left: 12px; gap: 11px; font-size: 14.500px; color: #e6ddcf; }
.tsearch span { padding-top: 1px; }
.art { margin: 0 0 0 auto; }
.w56t { width: 56px; } .w42t { width: 42px; } .w42e { width: 42px; } .w54t { width: 54px; } .w24y { width: 24px; }
.app { box-shadow: inset 0 -2px #fbd9b3; }
.app.w56t { width: 40px; margin: 0 9px 0 8px; } .app.w42e { width: 40px; margin-right: 0; } .app.w50 { width: 40px; margin-left: 5px; }
.hot { background: #925a1a; }
.tray { margin-left: auto; display: flex; align-items: center; font-size: 14px; }
.weather { width: 33px; }
.cond { margin-left: 8px; margin-right: 17px; }
.twin { display: flex; flex-direction: column; align-items: center; font-size: 12px; line-height: 18px; }
.lang { width: 36px; } .clock { width: 65px; }
.notif { width: 51px; padding-left: 10px; height: 40px; padding-top: 9px; }
```
FILE: app.js
```js
const names = ['Aarav Kumar', 'Rohan Sharma', 'Kunal Verma', 'Sneha Reddy', 'Arnav Dutta', 'Priya Menon', 'Aditya Iyer', 'Kavya Sharma', 'Nikhil Bansal', 'Manav Kapoor', 'Simran Kaur', 'Tushar Jain', 'Vihaan Chatterjee', 'Ishaan Gupta', 'Tanya Verma', 'Krish Patel', 'Aanya Deshmukh', 'Raghav Bhatia', 'Yash Chauhan', 'Aditi Bansal', 'Omkar Kulkarni', 'Parth Mahajan', 'Trisha Das'];
const genders = 'FMMFMFMFMMFMMMFMFMMFMMF';
const weekdays = ['Thu', 'Fri', 'Sat', 'Sun', 'Mon', 'Tue', 'Wed'];
const days = Array.from({ length: 31 }, (_, i) => i + 1);
const two = n => String(n).padStart(2, '0');
const cell = (cls, html = '') => `<div class="c ${cls}">${html}</div>`;
const many = (n, cls) => cell(cls).repeat(n);
const row = (cls, html) => `<div class="r ${cls}">${html}</div>`;
const tail = many(4, 'hx') + cell('hz');
const colName = i => (i < 26 ? '' : 'A') + String.fromCharCode(65 + i % 26);
const colClass = i => i === 0 ? 'hA' : i === 1 ? 'hB' : i === 2 ? 'hC' : i < 34 ? 'hd' : 'hx';

let html = row('colhead', cell('rh', '<i class="corner"></i>') +
  Array.from({ length: 39 }, (_, i) => cell(colClass(i), colName(i))).join('') + cell('hz act'));

const title = '<svg width="1480" height="64"><text x="430" y="51" textLength="622" lengthAdjust="spacing" class="brand">TECHDIGITS INSTITUTE</text></svg>';
html += row('r1', cell('rh act', '1') + cell('merged', title) + many(5, 'hx') + cell('hz selected'));
html += row('r2', cell('rh', '2') + cell('hA blue white', 'Month') + cell('hB pale white', 'Aug') + cell('hC') + many(3, 'hd') + cell('hd wr') +
  cell('m144 pale white', '01-Aug-2025') + cell('m72 blue white', 'to') + cell('m144 pale white', '31-Aug-2025') +
  many(13, 'hd') + cell('hd wr') + cell('m108 pale white', '2025') + cell('hx') + tail);
html += row('r3', cell('rh', '3') + cell('hA kb') + cell('hB kb') + cell('hC kb') + many(31, 'hd kb') + cell('hx') + tail);
html += row('r4', cell('rh', '4') + cell('hA k blue') + cell('hB k blue') + cell('hC k blue', 'Date') +
  days.map(d => cell('hd k blue', two(d))).join('') + cell('hx gb') + tail);
html += row('r5', cell('rh', '5') + cell('hA k head left', 'S.no') + cell('hB k head', 'Name') + cell('hC k head', 'Gender') +
  days.map(d => cell('hd k head', `<span class="vert">${weekdays[d % 7]}</span>`)).join('') + cell('hx gray total', 'Total') + tail);
names.forEach((name, i) => {
  html += row('rn', cell('rh', i + 6) + cell('hA k light left', 'C' + String(i + 1).padStart(3, '0')) + cell('hB k light left', name) +
    cell('hC k light', genders[i]) + days.map(d => cell('hd k ' + (d % 7 === 3 ? 'blue' : 'light'))).join('') + cell('hx gray') + tail);
});
document.getElementById('sheet').innerHTML = html;

// Track every interface label to its designed width.
document.querySelectorAll('[data-w]').forEach(el => {
  const natural = el.getBoundingClientRect().width;
  el.style.letterSpacing = (el.dataset.w - natural) / el.textContent.length + 'px';
});
```
